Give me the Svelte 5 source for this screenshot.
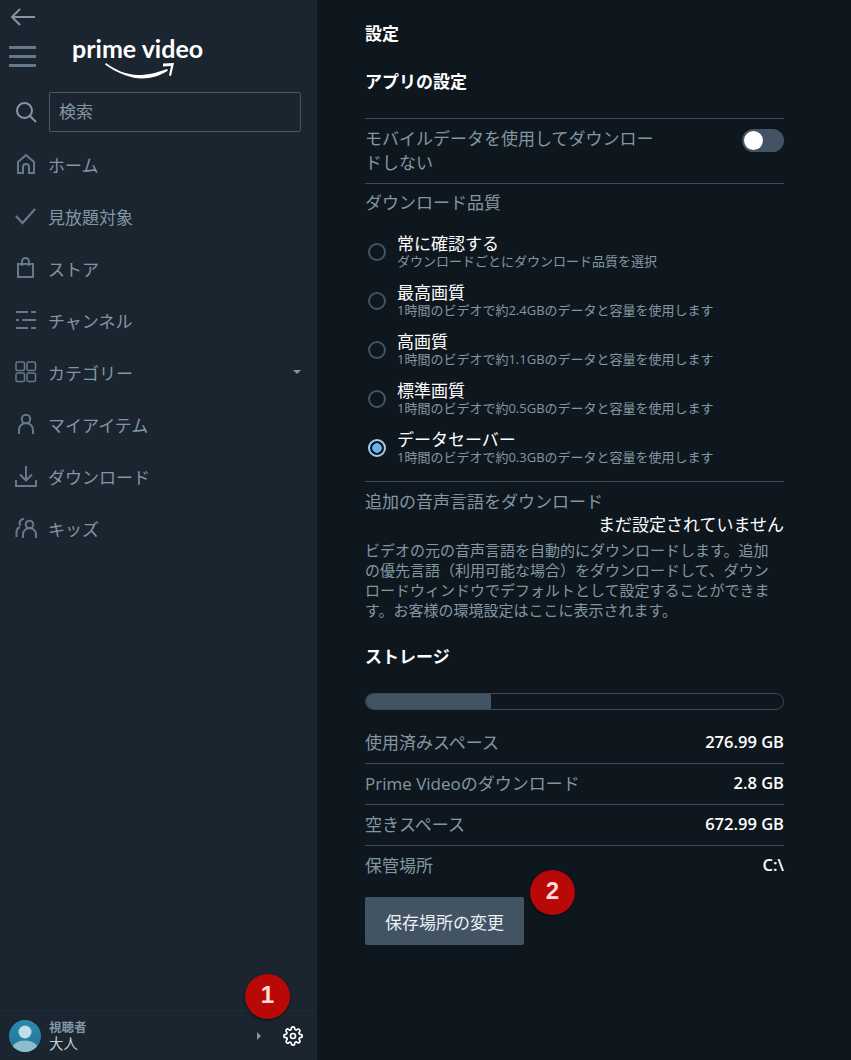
<script lang="ts">
  const nav = [
    { label: 'ホーム', icon: 'home' },
    { label: '見放題対象', icon: 'check' },
    { label: 'ストア', icon: 'bag' },
    { label: 'チャンネル', icon: 'channels' },
    { label: 'カテゴリー', icon: 'grid', caret: true },
    { label: 'マイアイテム', icon: 'person' },
    { label: 'ダウンロード', icon: 'download' },
    { label: 'キッズ', icon: 'kids' }
  ];

  const qualities = [
    { title: '常に確認する', sub: 'ダウンロードごとにダウンロード品質を選択' },
    { title: '最高画質', sub: '1時間のビデオで約2.4GBのデータと容量を使用します' },
    { title: '高画質', sub: '1時間のビデオで約1.1GBのデータと容量を使用します' },
    { title: '標準画質', sub: '1時間のビデオで約0.5GBのデータと容量を使用します' },
    { title: 'データセーバー', sub: '1時間のビデオで約0.3GBのデータと容量を使用します', selected: true }
  ];

  const storage = [
    { label: '使用済みスペース', value: '276.99 GB' },
    { label: 'Prime Videoのダウンロード', value: '2.8 GB' },
    { label: '空きスペース', value: '672.99 GB' },
    { label: '保管場所', value: 'C:\\' }
  ];
</script>

<div class="page">
  <aside class="sidebar">
    <svg class="back" width="26" height="18" viewBox="0 0 26 18" fill="none" stroke="#8197a4" stroke-width="2">
      <path d="M25 9H2M10 1L2 9l8 8" />
    </svg>

    <div class="brand">
      <div class="burger"><span></span><span></span><span></span></div>
      <div class="logo">
        <span class="logo-text">prime video</span>
        <svg class="smile" width="70" height="17" viewBox="0 0 70 17" fill="#fff">
          <path d="M0 1.500C13 11 27 15.500 37 15.500c9 0 19-3 26-8l-1-1.500C50 10.500 41 12 33 12 22 12 10 7 1 0z" />
          <path d="M58 .500L69 0l-3 13-2-.500 2-9.500-8 .500z" />
        </svg>
      </div>
    </div>

    <div class="search">
      <svg width="22" height="22" viewBox="0 0 22 22" fill="none" stroke="#8197a4" stroke-width="2">
        <circle cx="9.500" cy="9.500" r="7.500" />
        <path d="M15 15l6 6" />
      </svg>
      <div class="search-box">検索</div>
    </div>

    <nav>
      {#each nav as item}
        <div class="nav-item">
          <svg class="nav-icon" width="22" height="22" viewBox="0 0 22 22" fill="none" stroke="#64798a" stroke-width="2">
            {#if item.icon === 'home'}
              <path d="M3 20V9l8-7 8 7v11h-5v-6a3 3 0 0 0-6 0v6z" />
            {:else if item.icon === 'check'}
              <path d="M1 11l6.500 7L20 4" stroke-width="2.200" />
            {:else if item.icon === 'bag'}
              <path d="M3 7h15v13H3zM7 9V4.500a3.500 3.500 0 0 1 7 0V9" />
            {:else if item.icon === 'channels'}
              <path d="M1 3h12M16 3h5M7 11h14M1 11h3M1 19h12M16 19h5" />
            {:else if item.icon === 'grid'}
              <rect x="1" y="1" width="8.500" height="8.500" rx="1.500" stroke-width="1.500" />
              <rect x="12" y="1" width="8.500" height="8.500" rx="1.500" stroke-width="1.500" />
              <rect x="1" y="12" width="8.500" height="8.500" rx="1.500" stroke-width="1.500" />
              <rect x="12" y="12" width="8.500" height="8.500" rx="1.500" stroke-width="1.500" />
            {:else if item.icon === 'person'}
              <circle cx="11" cy="6" r="4.200" />
              <path d="M4 21v-4a7 7 0 0 1 14 0v4" />
            {:else if item.icon === 'download'}
              <path d="M11 1v14M5 9.500l6 6 6-6M1 15v6h20v-6" />
            {:else if item.icon === 'kids'}
              <circle cx="14.500" cy="7.500" r="3.800" />
              <path d="M8 21v-3.500a6.500 6.500 0 0 1 13 0V21M9 2a4 4 0 0 0-3.500 6.500M1.500 20v-4.500A6 6 0 0 1 5 10" />
            {/if}
          </svg>
          <span class="nav-label">{item.label}</span>
          {#if item.caret}<span class="caret"></span>{/if}
        </div>
      {/each}
    </nav>

    <footer class="profile">
      <svg class="avatar" width="32" height="32" viewBox="0 0 32 32">
        <defs>
          <clipPath id="avatar-clip"><circle cx="16" cy="16" r="16" /></clipPath>
          <linearGradient id="avatar-bg" x1="0" y1="0" x2="0" y2="1">
            <stop offset="0" stop-color="#2a8ab3" />
            <stop offset="1" stop-color="#237594" />
          </linearGradient>
        </defs>
        <g clip-path="url(#avatar-clip)">
          <rect width="32" height="32" fill="url(#avatar-bg)" />
          <circle cx="16" cy="12" r="6.500" fill="#c3dde6" />
          <ellipse cx="16" cy="29" rx="13" ry="8.500" fill="#8fbccb" />
        </g>
      </svg>
      <div class="who">
        <span class="who-label">視聴者</span>
        <span class="who-name">大人</span>
      </div>
      <span class="profile-caret"></span>
      <svg class="gear" width="20" height="20" viewBox="0 0 24 24" fill="none" stroke="#fff" stroke-width="2" stroke-linejoin="round">
        <circle cx="12" cy="12" r="3" />
        <path d="M19.400 15a1.650 1.650 0 0 0 .33 1.820l.06.06a2 2 0 1 1-2.830 2.830l-.06-.06a1.650 1.650 0 0 0-2.820 1.170V21a2 2 0 0 1-4 0v-.09a1.650 1.650 0 0 0-2.850-1.120l-.06.06a2 2 0 1 1-2.830-2.830l.06-.06A1.650 1.650 0 0 0 3.090 14H3a2 2 0 0 1 0-4h.09a1.650 1.650 0 0 0 1.120-2.850l-.06-.06a2 2 0 1 1 2.830-2.830l.06.06A1.650 1.650 0 0 0 10 3.090V3a2 2 0 0 1 4 0v.09a1.650 1.650 0 0 0 2.820 1.170l.06-.06a2 2 0 1 1 2.830 2.830l-.06.06A1.650 1.650 0 0 0 20.910 10H21a2 2 0 0 1 0 4h-.09a1.650 1.650 0 0 0-1.510 1z" />
      </svg>
    </footer>

    <span class="badge badge-one">1</span>
  </aside>

  <main class="content">
    <h1>設定</h1>
    <h2 class="app-heading">アプリの設定</h2>

    <div class="toggle-row">
      <span class="toggle-label">モバイルデータを使用してダウンロードしない</span>
      <span class="toggle"><span class="knob"></span></span>
    </div>

    <section class="quality">
      <div class="muted-title">ダウンロード品質</div>
      <div class="options">
        {#each qualities as q}
          <div class="option">
            <span class="radio" class:selected={q.selected}></span>
            <div class="option-text">
              <span class="option-title">{q.title}</span>
              <span class="option-sub">{q.sub}</span>
            </div>
          </div>
        {/each}
      </div>
    </section>

    <section class="audio">
      <div class="muted-title">追加の音声言語をダウンロード</div>
      <div class="audio-value">まだ設定されていません</div>
      <p>ビデオの元の音声言語を自動的にダウンロードします。追加の優先言語（利用可能な場合）をダウンロードして、ダウンロードウィンドウでデフォルトとして設定することができます。お客様の環境設定はここに表示されます。</p>
    </section>

    <h2 class="storage-heading">ストレージ</h2>
    <div class="meter"><div class="meter-fill" style="width: 30%"></div></div>

    <div class="rows">
      {#each storage as row}
        <div class="row">
          <span class="row-label">{row.label}</span>
          <span class="row-value">{row.value}</span>
        </div>
      {/each}
    </div>

    <div class="actions">
      <button class="change">保存場所の変更</button>
      <span class="badge badge-two">2</span>
    </div>
  </main>
</div>

<style>
  :global(body) {
    margin: 0;
    background: #0f171e;
  }
  .page {
    display: flex;
    height: 1060px;
    overflow: hidden;
    font-family: "Open Sans", "Noto Sans CJK JP", sans-serif;
    color: #8197a4;
  }

  .sidebar {
    position: relative;
    box-sizing: border-box;
    width: 317px;
    flex: none;
    display: flex;
    flex-direction: column;
    background: #1b2530;
  }
  .back {
    display: block;
    margin: 8px 0 0 10px;
  }
  .brand {
    display: flex;
    align-items: flex-start;
    margin-top: 11px;
    height: 56px;
  }
  .burger {
    display: flex;
    flex-direction: column;
    gap: 6px;
    margin: 9px 0 0 9px;
  }
  .burger span {
    display: block;
    width: 27px;
    height: 3px;
    background: #64798a;
  }
  .logo {
    margin-left: 36px;
    width: 132px;
  }
  .logo-text {
    display: block;
    font-family: Lato, sans-serif;
    font-weight: 700;
    font-size: 25px;
    line-height: 30px;
    margin-top: -4px;
    color: #fff;
    white-space: nowrap;
  }
  .smile {
    display: block;
    margin: 0 0 0 33px;
  }
  .search {
    display: flex;
    align-items: center;
    gap: 12px;
    margin: -1px 16px 0 15px;
  }
  .search-box {
    box-sizing: border-box;
    flex: 1;
    height: 40px;
    line-height: 38px;
    padding-left: 9px;
    font-size: 17px;
    color: #8197a4;
    border: 1px solid #465766;
    border-radius: 2px;
  }
  nav {
    margin-top: 6px;
  }
  .nav-item {
    display: flex;
    align-items: center;
    height: 52px;
    padding: 0 16px 0 15px;
  }
  .nav-icon {
    flex: none;
  }
  .nav-label {
    margin-left: 11px;
    font-size: 17px;
    color: #8197a4;
  }
  .caret {
    margin-left: auto;
    border: 4px solid transparent;
    border-top: 4px solid #8197a4;
    border-bottom: 0;
  }
  .profile {
    margin-top: auto;
    display: flex;
    align-items: center;
    height: 50px;
    box-sizing: border-box;
    padding: 0 14px 0 9px;
    border-top: 1px solid #212c38;
  }
  .who {
    display: flex;
    flex-direction: column;
    margin-left: 8px;
    line-height: 16px;
  }
  .who-label {
    font-size: 12.500px;
    font-weight: 700;
    color: #8197a4;
  }
  .who-name {
    font-size: 14.500px;
    color: #c5ced4;
  }
  .profile-caret {
    margin-left: auto;
    border: 4px solid transparent;
    border-left: 4px solid #8197a4;
    border-right: 0;
  }
  .gear {
    margin-left: 22px;
  }

  .badge {
    position: absolute;
    width: 45px;
    height: 45px;
    border-radius: 50%;
    background: #b80808;
    box-shadow: 0 1px 3px rgba(0, 0, 0, 0.6);
    color: #ffd9d9;
    font-family: "Liberation Sans", sans-serif;
    font-size: 24px;
    font-weight: 700;
    line-height: 42px;
    text-align: center;
  }
  .badge-one {
    left: 245px;
    top: 974px;
  }
  .badge-two {
    left: 165px;
    top: -27px;
  }

  .content {
    box-sizing: border-box;
    flex: 1;
    padding: 0 67px 0 48px;
  }
  h1 {
    margin: 22px 0 0;
    font-size: 17px;
    line-height: 24px;
    font-weight: 700;
    color: #fff;
  }
  h2 {
    margin: 0;
    font-size: 17px;
    line-height: 24px;
    font-weight: 700;
    color: #fff;
  }
  .app-heading {
    margin-top: 24px;
  }
  .toggle-row {
    display: flex;
    justify-content: space-between;
    align-items: flex-start;
    margin-top: 24px;
    padding: 8px 0 8px;
    border-top: 1px solid #3a4a58;
    border-bottom: 1px solid #3a4a58;
  }
  .toggle-label {
    width: 292px;
    font-size: 17px;
    line-height: 24px;
    color: #8197a4;
  }
  .toggle {
    position: relative;
    width: 42px;
    height: 23px;
    margin-top: 2px;
    border-radius: 12px;
    background: #425364;
  }
  .knob {
    position: absolute;
    left: 2px;
    top: 2px;
    width: 19px;
    height: 19px;
    border-radius: 50%;
    background: #fff;
  }
  .muted-title {
    font-size: 17px;
    line-height: 24px;
    color: #8197a4;
  }
  .quality {
    padding: 7px 0 0;
  }
  .options {
    margin-top: 11px;
    padding-bottom: 10px;
    border-bottom: 1px solid #3a4a58;
  }
  .option {
    display: flex;
    align-items: center;
    height: 49px;
    padding-left: 3px;
  }
  .radio {
    flex: none;
    box-sizing: border-box;
    width: 18px;
    height: 18px;
    margin-top: 3px;
    border: 2px solid #425364;
    border-radius: 50%;
  }
  .radio.selected {
    border-color: #a5cdf0;
    background: radial-gradient(circle, #69b0ee 0 4.500px, transparent 5px);
  }
  .option-text {
    display: flex;
    flex-direction: column;
    margin-left: 11px;
  }
  .option-title {
    font-size: 17px;
    line-height: 21px;
    color: #fff;
  }
  .option-sub {
    font-size: 13px;
    line-height: 15px;
    color: #8197a4;
  }
  .audio {
    padding-top: 8px;
  }
  .audio-value {
    font-size: 17px;
    line-height: 24px;
    text-align: right;
    color: #fff;
    margin-top: -1px;
  }
  .audio p {
    width: 410px;
    margin: 3px 0 0;
    font-size: 15px;
    line-height: 20px;
    color: #8197a4;
    text-spacing-trim: space-all;
  }
  .storage-heading {
    margin-top: 25px;
  }
  .meter {
    box-sizing: border-box;
    height: 17px;
    margin-top: 24px;
    border: 1px solid #3a4a58;
    border-radius: 9px;
    overflow: hidden;
  }
  .meter-fill {
    height: 100%;
    background: #425364;
  }
  .rows {
    margin-top: 13px;
  }
  .row {
    display: flex;
    justify-content: space-between;
    align-items: center;
    height: 36px;
    padding-bottom: 4px;
    border-bottom: 1px solid #3a4a58;
  }
  .row:last-child {
    border-bottom: 0;
  }
  .row-label {
    font-size: 17px;
    color: #8197a4;
  }
  .row-value {
    font-size: 16.500px;
    font-weight: 600;
    color: #fff;
  }
  .actions {
    position: relative;
    margin-top: 11px;
  }
  .change {
    width: 159px;
    height: 48px;
    padding: 0;
    border: 0;
    border-radius: 2px;
    background: #425364;
    color: #eef1f3;
    font-family: inherit;
    font-size: 17px;
  }
</style>
